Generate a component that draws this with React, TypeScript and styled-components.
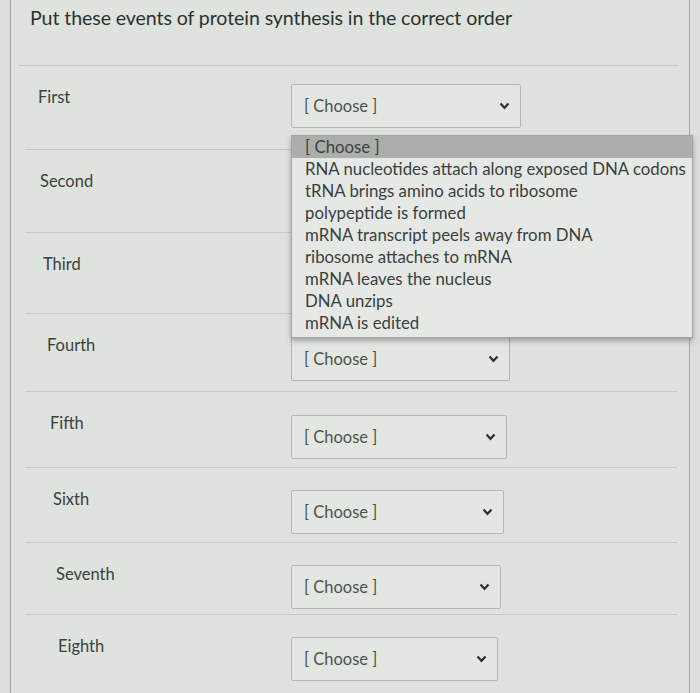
import React from 'react';
import styled, { createGlobalStyle } from 'styled-components';

const GlobalStyle = createGlobalStyle`
    html, body {
        margin: 0;
        padding: 0;
        background: #d9ddd8;
    }
    body {
        font-family: Lato, "Open Sans", "Liberation Sans", sans-serif;
        color: #343a38;
    }
`;

const Frame = styled.div`
    width: 700px;
    height: 693px;
    overflow: hidden;
    background: #dbdfda;
`;

const Panel = styled.div`
    margin-left: 10px;
    width: 678px;
    height: 693px;
    border-left: 1px solid #9ea29e;
    border-right: 1px solid #a4a8a4;
    background: #dfe3de;
`;

const Header = styled.div`
    height: 59px;
    margin: 0 10px 0 8px;
    padding: 6px 0 0 11px;
    border-bottom: 1px solid #c3c7c2;
`;

const Title = styled.h1`
    margin: 0;
    font-size: 19.6px;
    font-weight: 400;
    line-height: 24px;
    color: #2c3230;
    letter-spacing: -0.1px;
`;

const Row = styled.div<{ $height: number; $last?: boolean }>`
    display: grid;
    grid-template-columns: 266px 1fr;
    height: ${(p) => p.$height}px;
    margin: 0 12px 0 14px;
    border-bottom: ${(p) => (p.$last ? 'none' : '1px solid #c5c9c4')};
`;

const Label = styled.div<{ $indent: number }>`
    padding-top: 21px;
    padding-left: ${(p) => p.$indent}px;
    font-size: 16.5px;
    line-height: 20px;
    color: #3b413f;
`;

const SelectWrap = styled.div<{ $top: number }>`
    position: relative;
    padding-top: ${(p) => p.$top}px;
`;

const Select = styled.div<{ $width: number }>`
    display: flex;
    align-items: center;
    justify-content: space-between;
    box-sizing: border-box;
    width: ${(p) => p.$width}px;
    height: 44px;
    padding: 0 10px 0 12px;
    border: 1px solid #b3b7b2;
    border-radius: 2px;
    background: #e3e7e2;
    font-size: 16.5px;
    color: #4d5350;
`;

const Menu = styled.div`
    position: absolute;
    top: 69px;
    left: 0;
    width: 400px;
    padding: 0 0 3px;
    background: #e5e8e4;
    border: 1px solid #a2a6a2;
    box-shadow: 0 3px 5px rgba(0, 0, 0, 0.3);
    z-index: 2;
`;

const Option = styled.div<{ $active?: boolean }>`
    padding-left: 13px;
    font-size: 16.8px;
    line-height: 22px;
    white-space: nowrap;
    color: #3b413f;
    background: ${(p) => (p.$active ? '#abaeab' : 'transparent')};
`;

const Chevron = () => (
    <svg width="11" height="8" viewBox="0 0 11 8">
        <polyline points="1.5,1.5 5.5,5.8 9.5,1.5" fill="none" stroke="#2d3331" strokeWidth="2.2" />
    </svg>
);

const rows = [
    { label: 'First', indent: 13, width: 230, height: 83, top: 18 },
    { label: 'Second', indent: 15, width: 228, height: 82, top: 19 },
    { label: 'Third', indent: 18, width: 226, height: 80, top: 20 },
    { label: 'Fourth', indent: 22, width: 219, height: 77, top: 23 },
    { label: 'Fifth', indent: 25, width: 216, height: 75, top: 23 },
    { label: 'Sixth', indent: 28, width: 213, height: 74, top: 22 },
    { label: 'Seventh', indent: 31, width: 210, height: 71, top: 22 },
    { label: 'Eighth', indent: 33, width: 207, height: 78, top: 22 },
];

const options = [
    '[ Choose ]',
    'RNA nucleotides attach along exposed DNA codons',
    'tRNA brings amino acids to ribosome',
    'polypeptide is formed',
    'mRNA transcript peels away from DNA',
    'ribosome attaches to mRNA',
    'mRNA leaves the nucleus',
    'DNA unzips',
    'mRNA is edited',
];

const App: React.FC = () => {
    return (
        <Frame>
            <GlobalStyle />
            <Panel>
                <Header>
                    <Title>Put these events of protein synthesis in the correct order</Title>
                </Header>
                {rows.map((row, i) => (
                    <Row key={row.label} $height={row.height} $last={i === rows.length - 1}>
                        <Label $indent={row.indent}>{row.label}</Label>
                        <SelectWrap $top={row.top}>
                            {i > 0 && i < 3 ? null : (
                                <Select $width={row.width}>
                                    <span>[ Choose ]</span>
                                    <Chevron />
                                </Select>
                            )}
                            {i === 0 && (
                                <Menu>
                                    {options.map((o, j) => (
                                        <Option key={o} $active={j === 0}>
                                            {o}
                                        </Option>
                                    ))}
                                </Menu>
                            )}
                        </SelectWrap>
                    </Row>
                ))}
            </Panel>
        </Frame>
    );
};

export default App;
